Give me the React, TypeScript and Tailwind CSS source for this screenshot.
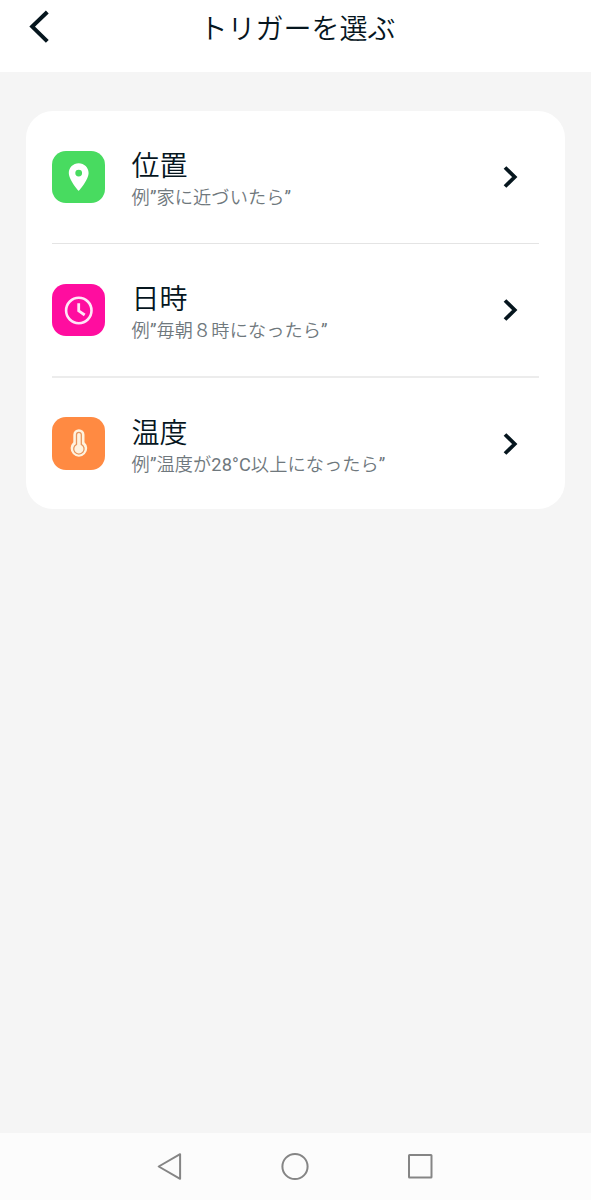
import type { ReactNode } from "react";

type Trigger = {
  title: string;
  example: string;
  color: string;
  icon: ReactNode;
};

function PinIcon() {
  return (
    <svg width="53" height="53" viewBox="0 0 53 53">
      <path
        d="M26.7 12.2c-5.5 0-9.9 4.4-9.9 9.8 0 7 9.9 18 9.9 18s9.9-11 9.9-18c0-5.4-4.4-9.8-9.9-9.8zm0 13.3a3.4 3.4 0 1 1 0-6.8 3.4 3.4 0 0 1 0 6.8z"
        fill="#fff"
      />
    </svg>
  );
}

function ClockIcon() {
  return (
    <svg width="53" height="53" viewBox="0 0 53 53" fill="none" stroke="#ffe6f8" strokeWidth="2.6">
      <circle cx="26.8" cy="26.5" r="12.7" />
      <path d="M26.7 19.2v7.6l6 4.2" strokeWidth="2.8" />
    </svg>
  );
}

function ThermometerIcon() {
  return (
    <svg width="53" height="53" viewBox="0 0 53 53">
      <path
        d="M26.9 12.2a5.6 5.6 0 0 0-5.6 5.6v7.4a8.3 8.3 0 1 0 11.2 0v-7.4a5.6 5.6 0 0 0-5.6-5.6z"
        fill="#fff3df"
      />
      <path
        d="M26.9 15.3a2.4 2.4 0 0 0-2.4 2.4v9.6a5.2 5.2 0 1 0 4.8 0v-9.6a2.4 2.4 0 0 0-2.4-2.4z"
        fill="#fff3df"
        stroke="#e8955c"
        strokeWidth="1.3"
      />
    </svg>
  );
}

const triggers: Trigger[] = [
  { title: "位置", example: "例”家に近づいたら”", color: "bg-[#48db60]", icon: <PinIcon /> },
  { title: "日時", example: "例”毎朝８時になったら”", color: "bg-[#ff0d9f]", icon: <ClockIcon /> },
  { title: "温度", example: "例”温度が28°C以上になったら”", color: "bg-[#ff8a42]", icon: <ThermometerIcon /> },
];

// Digits and quotes stay at regular weight, the Japanese text is a step lighter.
function Example({ text }: { text: string }) {
  return text.split(/([”°0-9A-Z]+)/).map((part, i) => (
    <span key={i} className={i % 2 ? "font-normal" : undefined}>
      {part}
    </span>
  ));
}

function TriggerRow({ title, example, color, icon }: Trigger) {
  return (
    <li className="flex h-[134px] items-center border-b-2 border-[#ececec] first:h-[133px] first:border-b first:border-[#e4e4e4] last:h-[131px] last:border-b-0">
      <div className={`ml-[0.4px] size-[52.6px] shrink-0 overflow-hidden rounded-[14px] ${color}`}>{icon}</div>
      <div className="ml-[26.6px] flex-1 whitespace-nowrap pt-[6px]">
        <p className="text-[28px] leading-9 text-[#06161e]">{title}</p>
        <p className="text-[18.2px] leading-[26px] tracking-[0.1px] text-[#6f787d]">
          <Example text={example} />
        </p>
      </div>
      <svg className="mr-[19px]" width="18" height="24" viewBox="0 0 18 24" fill="none">
        <path d="M3 2.5l9.7 9.5L3 21.5" stroke="#06161e" strokeWidth="3.8" />
      </svg>
    </li>
  );
}

export default function App() {
  return (
    <div className="flex h-[1200px] w-full flex-col bg-[#f5f5f5] font-['Roboto','Noto_Sans_CJK_JP',sans-serif] font-[350]">
      <header className="grid h-[72px] grid-cols-[80px_1fr_76px] bg-white pb-[18px]">
        <button className="flex items-center pl-7" aria-label="戻る">
          <svg width="24" height="34" viewBox="0 0 24 34" fill="none">
            <path d="M19.3 2L4.2 16.6l15.1 14.8" stroke="#06161e" strokeWidth="4" />
          </svg>
        </button>
        <h1 className="self-center pt-[5px] text-center text-[28px] leading-9 text-[#06161e]">トリガーを選ぶ</h1>
      </header>

      <main className="flex-1 px-[26px] pt-[39px]">
        <ul className="rounded-[27px] bg-white px-[26px]">
          {triggers.map((trigger) => (
            <TriggerRow key={trigger.title} {...trigger} />
          ))}
        </ul>
      </main>

      <nav className="flex h-[67px] items-center justify-center bg-[#fcfcfc]">
        <svg width="280" height="30" viewBox="0 0 280 30" fill="none" stroke="#858585" strokeWidth="2" strokeLinejoin="round">
          <path d="M24.1 2.2v24.6L2.7 14.5z" />
          <circle cx="139" cy="14.5" r="12.6" />
          <rect x="253" y="3" width="22.5" height="22.5" rx="0.5" />
        </svg>
      </nav>
    </div>
  );
}
